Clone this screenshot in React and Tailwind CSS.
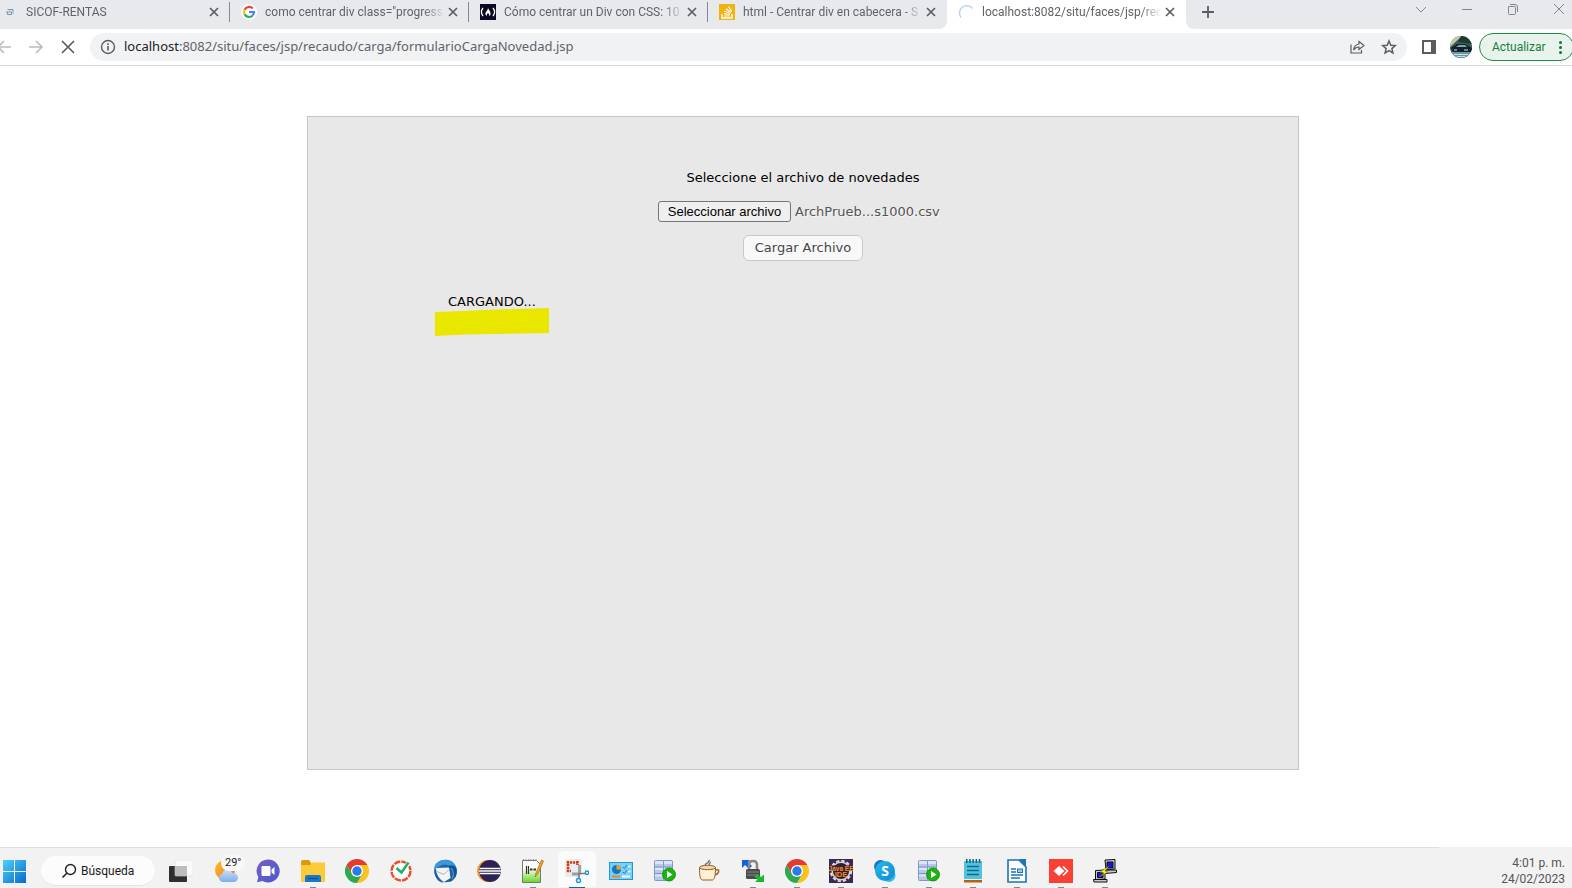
import { useRef, useState } from "react";

const tabs = [
  { title: "SICOF-RENTAS", icon: <SicofIcon /> },
  { title: 'como centrar div class="progress', icon: <GoogleIcon /> },
  { title: "Cómo centrar un Div con CSS: 10", icon: <CampIcon /> },
  { title: "html - Centrar div en cabecera - S", icon: <StackIcon /> },
  { title: "localhost:8082/situ/faces/jsp/reca", icon: <Spinner />, active: true },
];

const apps = [
  { name: "Explorador de archivos", icon: <FolderIcon />, open: true },
  { name: "Google Chrome", icon: <ChromeIcon /> },
  { name: "Reloj", icon: <ClockIcon /> },
  { name: "Thunderbird", icon: <ThunderbirdIcon /> },
  { name: "Eclipse", icon: <EclipseIcon /> },
  { name: "Notepad++", icon: <NotepadPlusIcon />, open: true },
  { name: "Recortes", icon: <SnipIcon />, focused: true },
  { name: "Panel de control", icon: <ControlPanelIcon /> },
  { name: "SQL Developer", icon: <DatabaseIcon /> },
  { name: "Java", icon: <CupIcon /> },
  { name: "WinSCP", icon: <LockIcon />, open: true },
  { name: "Google Chrome 2", icon: <ChromeIcon />, open: true },
  { name: "Java EE IDE", icon: <JavaEEIcon />, open: true },
  { name: "Skype", icon: <SkypeIcon />, open: true },
  { name: "SQL Developer 2", icon: <DatabaseIcon />, open: true },
  { name: "Bloc de notas", icon: <NotepadIcon />, open: true },
  { name: "Writer", icon: <WriterIcon />, open: true },
  { name: "AnyDesk", icon: <AnyDeskIcon />, open: true },
  { name: "PuTTY", icon: <PuttyIcon />, open: true },
];

function Svg({ size = 24, box = 24, children, className = "" }) {
  return (
    <svg
      width={size}
      height={size}
      viewBox={`0 0 ${box} ${box}`}
      fill="none"
      aria-hidden="true"
      className={`shrink-0 ${className}`}
    >
      {children}
    </svg>
  );
}

function SicofIcon() {
  return (
    <Svg size={16} box={16}>
      <path d="M5.500 5.500h5.500v3M4 8h5.500v2.500H5.500V8" stroke="#8097ab" />
      <path d="M7 7h3M10 9.500h2" stroke="#a9c4d8" />
    </Svg>
  );
}

function GoogleIcon() {
  return (
    <Svg size={16} box={16}>
      <circle cx="8" cy="8" r="8" fill="#fff" />
      <path d="M11.800 4.500A5 5 0 0 0 3.600 5.800" stroke="#ea4335" strokeWidth="2.200" />
      <path d="M3.600 5.800a5 5 0 0 0 0 4.500" stroke="#fbbc05" strokeWidth="2.200" />
      <path d="M3.600 10.300a5 5 0 0 0 7.800 1.400" stroke="#34a853" strokeWidth="2.200" />
      <path d="M8 8h5a5 5 0 0 1-1.600 3.700" stroke="#4285f4" strokeWidth="2.200" />
    </Svg>
  );
}

function CampIcon() {
  return (
    <Svg size={16} box={16}>
      <rect width="16" height="16" fill="#0a0a23" />
      <path d="M3 4C1 6.500 1 9.500 3 12M13 4c2 2.500 2 5.500 0 8" stroke="#fff" strokeWidth="1.300" />
      <path d="M8 4c.5 2 2.500 3 2.500 5.500 0 1.500-.8 2.200-1.500 2.500.5-1.500 0-2-1-3-1 1-1.500 1.500-1 3-1-.4-1.600-1.200-1.600-2.500C5.400 7.500 8 6.500 8 4z" fill="#fff" />
    </Svg>
  );
}

function StackIcon() {
  return (
    <Svg size={16} box={16}>
      <rect width="16" height="16" fill="#f0b310" />
      <path d="M3 10v4h10v-4" stroke="#fff" strokeWidth="1.300" />
      <path d="M5 12h6M5 9.700l6 .8M5.500 7.300l5.800 2M7 4.700l4.900 3.600M9.500 2.500l3.300 5" stroke="#fff" strokeWidth="1.200" />
    </Svg>
  );
}

function Spinner() {
  return (
    <Svg size={16} box={16}>
      <path d="M14.500 4.500A7.200 7.200 0 1 0 3 13.500" stroke="#b5d2fa" strokeWidth="1.500" />
    </Svg>
  );
}

function CloseIcon() {
  return (
    <Svg size={16} box={16}>
      <path d="m4 4 8 8M12 4l-8 8" stroke="#5a5e63" strokeWidth="1.700" />
    </Svg>
  );
}

function WindowsIcon() {
  return (
    <Svg>
      <defs>
        <linearGradient id="win" x1="0" y1="0" x2="1" y2="1">
          <stop stopColor="#4fd0fb" />
          <stop offset="1" stopColor="#0669cb" />
        </linearGradient>
      </defs>
      <path d="M1 0h23v23H1z" fill="url(#win)" />
      <path d="M12.500 0v24M0 11.500h24" stroke="#f2f2f2" />
    </Svg>
  );
}

function TaskViewIcon() {
  return (
    <Svg>
      <rect x="0" y="6" width="18" height="16" rx="1" fill="#2e3030" />
      <rect x="6" y="0" width="18" height="16" rx="1" fill="#fafafa" stroke="#dadada" strokeWidth=".6" />
      <path d="M6 6h12v10H6z" fill="#bcbebe" />
    </Svg>
  );
}

function WeatherIcon() {
  return (
    <Svg>
      <defs>
        <linearGradient id="sun" x1="0" y1="0" x2="1" y2="1">
          <stop stopColor="#fbbb2c" />
          <stop offset="1" stopColor="#f27c1c" />
        </linearGradient>
        <linearGradient id="cloud" x1="0" y1="0" x2="0" y2="1">
          <stop stopColor="#c9dffa" />
          <stop offset="1" stopColor="#7fadea" />
        </linearGradient>
      </defs>
      <circle cx="10" cy="11" r="10" fill="url(#sun)" />
      <path d="M6 23a4 4 0 0 1-.5-7.800 5.500 5.500 0 0 1 10.500-1A4.500 4.500 0 0 1 18 23z" transform="translate(1.500 0)" fill="url(#cloud)" />
    </Svg>
  );
}

function TeamsIcon() {
  return (
    <Svg>
      <defs>
        <linearGradient id="teams" x1="0" y1="0" x2="1" y2="1">
          <stop stopColor="#8159c4" />
          <stop offset=".5" stopColor="#5b5fc7" />
          <stop offset="1" stopColor="#5059c9" />
        </linearGradient>
      </defs>
      <path d="M12 .5A11.500 11.500 0 1 1 6.500 22L1 23.300 2.300 18A11.500 11.500 0 0 1 12 .5z" fill="url(#teams)" />
      <rect x="5.500" y="7" width="9" height="10" rx="1.200" fill="#fff" />
      <path d="m15.500 10.500 3-2.500v8l-3-2.500z" fill="#fff" />
    </Svg>
  );
}

function FolderIcon() {
  return (
    <Svg>
      <path d="M0 3q0-2 2-2h6l2 3v5H0z" fill="#d99a0b" />
      <path d="M0 6h9l2-2.500h13V22q0 1-1 1H1q-1 0-1-1z" fill="#fcc938" />
      <path d="M4 23v-5q0-2 2-2h12q2 0 2 2v5z" fill="#1a78cc" />
      <path d="M7 19.500h10" stroke="#0b5299" strokeWidth="1.500" />
    </Svg>
  );
}

function ChromeIcon() {
  return (
    <Svg>
      <path d="M12 6h10.400A12 12 0 0 0 1.600 6l5.200 9z" fill="#e33b2e" />
      <path d="M12 6h10.400A12 12 0 0 1 12 24l5.200-9z" fill="#fcc31e" />
      <path d="M6.800 15 1.600 6A12 12 0 0 0 12 24l5.200-9z" fill="#2da94f" />
      <circle cx="12" cy="12" r="6" fill="#fff" />
      <circle cx="12" cy="12" r="4.700" fill="#2a7af0" />
    </Svg>
  );
}

function ClockIcon() {
  return (
    <Svg>
      <circle cx="12" cy="12" r="11" fill="#fff" />
      <circle cx="12" cy="12" r="9.500" stroke="#e6502f" strokeWidth="2.500" strokeDasharray="6.500 .96" />
      <path d="m7.500 9 5 5 7-10" stroke="#fff" strokeWidth="4.500" />
      <path d="m7.500 9 5 4.500 7-10" stroke="#23b06a" strokeWidth="2.600" />
    </Svg>
  );
}

function ThunderbirdIcon() {
  return (
    <Svg>
      <circle cx="12.500" cy="12" r="11.300" fill="#1e62ab" />
      <path d="M1.500 11C0 5 6 .5 12 1c6 0 11 4 11.500 9-2-3-5-4-8-3.500C12 5 6 6 1.500 11z" fill="#3c98dc" />
      <path d="M3 9 16 8.500 17.500 19 11 23C6 20 3 15 3 9z" fill="#f4f4f4" />
      <path d="m4 12.500 7 3 5-5" stroke="#aeb5bd" />
      <path d="M1.500 9c0 8 4 13 9.500 14.800C6 24 1 19 1.500 9z" fill="#12478a" />
      <path d="M15 8c5 2 6 9 1 15 7-2 9-9 7-14-2-3-5-3-8-1z" fill="#174f93" />
      <path d="M18 9c3 3 3 8 1 11" stroke="#3c98dc" strokeWidth="1.400" />
    </Svg>
  );
}

function EclipseIcon() {
  return (
    <Svg>
      <circle cx="11" cy="12" r="11" fill="#f79a25" />
      <circle cx="13" cy="12" r="11" fill="#2c2255" />
      <path d="M2.500 9.500h21M2 12h22M2.500 14.500h21" stroke="#fff" strokeWidth="1.400" />
    </Svg>
  );
}

function NotepadPlusIcon() {
  return (
    <Svg>
      <defs>
        <linearGradient id="npp" x1="0" y1="0" x2="0" y2="1">
          <stop offset=".35" stopColor="#fff" />
          <stop offset="1" stopColor="#65d61d" />
        </linearGradient>
      </defs>
      <path d="M1.500 1.500h14l4 4v18h-18z" fill="url(#npp)" stroke="#777" />
      <path d="M2 1h14" stroke="#777" strokeDasharray="1 1.500" strokeWidth="1.500" />
      <path d="M5.500 7v8M7.500 7v8" stroke="#333" strokeWidth="1.200" />
      <path d="M9 10.500h2.500M12.500 10.500H15" stroke="#333" strokeWidth="1.800" />
      <path d="m14 18 1-4L20.500 1l2 1L17 15z" fill="#f2a91c" stroke="#a0691a" strokeWidth=".7" />
    </Svg>
  );
}

function SnipIcon() {
  return (
    <Svg>
      <rect width="17" height="18" rx="2" fill="#e7ecf2" />
      <path d="M3 2v11M2 3.500h11M2 12h4M12.500 2v4" stroke="#d83b01" strokeWidth="2.600" strokeDasharray="2.200 .8" />
      <path d="M14.500 6v7q0 2-2 2H7" stroke="#9a9ea3" strokeWidth="2.800" />
      <path d="M14 14v6M14 14.500h7" stroke="#777b80" strokeWidth="1.600" />
      <circle cx="13.500" cy="21.500" r="2" stroke="#1898db" strokeWidth="1.500" />
      <circle cx="22" cy="13.700" r="1.700" stroke="#1898db" strokeWidth="1.500" />
    </Svg>
  );
}

function ControlPanelIcon() {
  return (
    <Svg>
      <rect x=".5" y="3.500" width="23" height="17" fill="#79d0f7" stroke="#2196d8" />
      <circle cx="7.500" cy="10.500" r="4.500" fill="#1676c4" />
      <path d="M7.500 10.500h4.500A4.500 4.500 0 0 0 7.500 6z" fill="#f7a21b" />
      <path d="M14 8l1.500 1.500L18 6M14 13l1.500 1.500L18 11" stroke="#1676c4" />
      <path d="M19 7.500h2.500M19 12.500h2.500" stroke="#fff" strokeWidth="1.600" />
      <path d="M3 17.500h8" stroke="#f08519" strokeWidth="2" />
      <path d="M13 17.500h8" stroke="#fff" strokeWidth="2" />
    </Svg>
  );
}

function DatabaseIcon() {
  return (
    <Svg>
      <rect x="1.500" y="1.500" width="18" height="20" rx="1" fill="#b8c8e6" stroke="#7d99c9" />
      <path d="M2 2h17v3H2zM2 9h17v2H2zM2 15.500h17v2H2z" fill="#dce6f6" />
      <path d="M1.500 8h18M1.500 14.500h18M10.500 2v20" stroke="#7d99c9" />
      <circle cx="16" cy="15.500" r="6.500" fill="#19b50c" stroke="#118807" strokeWidth=".8" />
      <path d="m14 12 5.500 3.500L14 19z" fill="#fff" />
    </Svg>
  );
}

function CupIcon() {
  return (
    <Svg>
      <path d="M9 7c-3-3 4-2 3-6M13 6c-2-1 1-2 0-3" stroke="#777" strokeWidth="1.500" />
      <path d="M18.500 11q4-1 3 2t-5 3" stroke="#a56728" strokeWidth="1.600" />
      <path d="M2.500 8.500c0 8 .5 12 3 12.500h10c2.500-1 3-6 3-12.500z" fill="#fff1d6" stroke="#9a5b24" />
      <ellipse cx="10.500" cy="8.500" rx="8" ry="2.200" fill="#f0d4ab" stroke="#9a5b24" />
    </Svg>
  );
}

function LockIcon() {
  return (
    <Svg>
      <path d="M1 1h8L7 3l4 4-3 3-4-4-3 3z" fill="#1262dd" />
      <path d="M8 11V6q0-4 4-4t4 4v5" stroke="#888" strokeWidth="2.500" />
      <rect x="5" y="10" width="14" height="10" rx="1.500" fill="#4b4b4b" />
      <path d="M6 13h12M6 16h12" stroke="#868686" />
      <path d="M23 23h-9l2.500-2.500L13 17l3-2 4 3 3-2.500z" fill="#18b830" />
    </Svg>
  );
}

function JavaEEIcon() {
  return (
    <Svg>
      <rect width="24" height="24" fill="#3d2654" />
      <circle cx="12" cy="12" r="10.200" stroke="#ddd" strokeWidth="2" strokeDasharray="3.340 2" />
      <circle cx="12" cy="12" r="8.800" fill="#2c1f30" stroke="#d5d5d5" strokeWidth="1.500" />
      <path d="M0 6.500h24v5H0z" fill="#3d2230" />
      <text x="12" y="11.500" textAnchor="middle" fontSize="6.500" fontWeight="700" fill="#f58a2c" fontFamily="Liberation Sans, sans-serif">
        Java EE
      </text>
      <text x="12" y="18" textAnchor="middle" fontSize="7.500" fontWeight="700" fill="#f58a2c" fontFamily="Liberation Sans, sans-serif">
        IDE
      </text>
    </Svg>
  );
}

function SkypeIcon() {
  return (
    <Svg>
      <defs>
        <linearGradient id="skype" x1="0" y1="0" x2="1" y2="1">
          <stop stopColor="#29b8ee" />
          <stop offset="1" stopColor="#0a8ad2" />
        </linearGradient>
      </defs>
      <circle cx="7.500" cy="7.500" r="6.500" fill="#1477c4" />
      <circle cx="16" cy="16.500" r="6.500" fill="#30bdf0" />
      <circle cx="12" cy="12" r="10" fill="url(#skype)" />
      <text x="12" y="17" textAnchor="middle" fontSize="14" fontWeight="700" fill="#fff" fontFamily="Open Sans, sans-serif">
        S
      </text>
    </Svg>
  );
}

function NotepadIcon() {
  return (
    <Svg>
      <rect x="3" y="2" width="18" height="19" rx="1" fill="#50c2dc" />
      <path d="M3 21h18v2.500H3z" fill="#b5611c" />
      <path d="M3 20.500h18" stroke="#eee" />
      <path d="M5 2h15" stroke="#0d6381" strokeWidth="4" strokeDasharray="1.500 1.700" />
      <path d="M6 7.500h12M6 11.500h12M6 15.500h12" stroke="#126a8a" strokeWidth="1.500" />
    </Svg>
  );
}

function WriterIcon() {
  return (
    <Svg>
      <path d="M3 1h11l7 7v15H3z" fill="#fff" stroke="#1e73b2" strokeWidth="1.600" />
      <path d="M14 0h7v8z" fill="#1e73b2" />
      <path d="M6 10h5M6 13h5M6 16h12M6 19h9" stroke="#1e73b2" strokeWidth="1.400" />
      <rect x="12.500" y="10" width="5" height="3.500" fill="#9fcbe9" stroke="#1e73b2" />
    </Svg>
  );
}

function AnyDeskIcon() {
  return (
    <Svg>
      <rect width="24" height="24" fill="#fa4034" />
      <path d="m10 7 5.500 5-5.500 5-5.500-5z" fill="#fff" />
      <path d="m14 7.500 4.500 4.500-4.500 4.500" stroke="#fff" strokeWidth="1.700" />
    </Svg>
  );
}

function PuttyIcon() {
  return (
    <Svg>
      <path d="m12 1 10-.500V10l-9 1zM10 11h13.500v2.500L12 14.500z" fill="#c9c9c9" stroke="#111" />
      <path d="M14 3h6v6h-6z" fill="#1515e8" stroke="#111" />
      <path d="M2.500 11.500 12 11v9l-9.500.5zM.5 20.500H14V23H1z" fill="#c9c9c9" stroke="#111" />
      <path d="M4.500 13.500h5.500v5H4.500z" fill="#1515e8" stroke="#111" />
      <path d="m16 7-9 6 4 1-5 4 9-5-3-1z" fill="#fff21a" stroke="#6b6400" strokeWidth=".5" />
    </Svg>
  );
}

function Tab({ tab, first, last }) {
  return (
    <div
      className={`flex h-[29px] min-w-0 items-center pb-[5px] ${
        first ? "w-[230px] pl-0.5" : "w-[239px] pl-[11px]"
      } ${tab.active ? "bg-white" : ""}`}
    >
      {tab.icon}
      <a
        href="#"
        className="ml-2 w-[180px] overflow-hidden text-xs whitespace-nowrap text-[#5f6368] [mask-image:linear-gradient(to_right,#000_88%,transparent)]"
      >
        {tab.title}
      </a>
      <button type="button" aria-label={`Cerrar ${tab.title}`}>
        <CloseIcon />
      </button>
      {!tab.active && !last && <span className="ml-auto h-5 w-px bg-[#85888d]" />}
    </div>
  );
}

function TabStrip() {
  return (
    <div className="flex h-[29px] bg-white">
      <div className="flex rounded-br-lg bg-[#e8e9ed]">
        {tabs
          .filter((tab) => !tab.active)
          .map((tab, i, list) => (
            <Tab key={tab.title} tab={tab} first={i === 0} last={i === list.length - 1} />
          ))}
      </div>
      <Tab tab={tabs[tabs.length - 1]} />
      <div className="flex flex-1 items-start justify-between overflow-hidden rounded-bl-lg bg-[#e8e9ed]">
        <button type="button" aria-label="Nueva pestaña" className="mt-1 ml-3.5">
          <Svg size={16} box={16}>
            <path d="M8 2v12M2 8h12" stroke="#5a5e63" strokeWidth="1.800" />
          </Svg>
        </button>
        <div className="-mr-2.5 flex">
          <WindowButton label="Buscar pestañas" d="m3 6 5 5 5-5" />
          <WindowButton label="Minimizar" d="M3 8.500h10" />
          <WindowButton label="Restaurar" d="M3.500 5.500h6q1 0 1 1v6q0 1-1 1h-5q-1 0-1-1v-7M5 3.500h5q2.500 0 2.500 2.500v5" />
          <WindowButton label="Cerrar" d="m3 3 10 10M13 3 3 13" />
        </div>
      </div>
    </div>
  );
}

function WindowButton({ label, d }) {
  return (
    <button type="button" aria-label={label} className="flex w-[46px] justify-center pt-px">
      <Svg size={16} box={16}>
        <path d={d} stroke="#85868a" />
      </Svg>
    </button>
  );
}

function Toolbar() {
  return (
    <div className="flex h-[37px] items-center overflow-hidden border-b border-[#d9dadc] bg-white">
      <button type="button" aria-label="Atrás" className="-ml-1">
        <Svg size={16} box={16}>
          <path d="M15 8H2M8 2 2 8l6 6" stroke="#babcbe" strokeWidth="1.600" />
        </Svg>
      </button>
      <button type="button" aria-label="Adelante" className="ml-4">
        <Svg size={16} box={16}>
          <path d="M1 8h13M8 2l6 6-6 6" stroke="#babcbe" strokeWidth="1.600" />
        </Svg>
      </button>
      <button type="button" aria-label="Detener" className="ml-4">
        <Svg size={16} box={16}>
          <path d="m2 2 12 12M14 2 2 14" stroke="#5a5e63" strokeWidth="1.700" />
        </Svg>
      </button>
      <div className="ml-3.5 flex h-7 flex-1 items-center rounded-full bg-[#f1f2f4] pr-2.5 pl-2.5">
        <Svg size={16} box={16}>
          <circle cx="8" cy="8" r="6.500" stroke="#5a5e63" strokeWidth="1.400" />
          <path d="M8 7v4.500M8 4.200V6" stroke="#5a5e63" strokeWidth="1.600" />
        </Svg>
        <p className="ml-2 flex-1 font-['Noto_Sans','Open_Sans',sans-serif] text-[13px] whitespace-nowrap text-[#5f6368]">
          <span className="text-[#202124]">localhost</span>
          :8082/situ/faces/jsp/recaudo/carga/formularioCargaNovedad.jsp
        </p>
        <button type="button" aria-label="Compartir">
          <Svg size={16} box={16}>
            <path d="M2 5.500v8.500h10.500v-3" stroke="#5a5e63" strokeWidth="1.200" />
            <path d="M10 2.500 15 6.500l-5 4V8C7.500 8 6 9 4.500 11 5 7.500 7 5.500 10 5z" stroke="#5a5e63" strokeWidth="1.200" />
          </Svg>
        </button>
        <button type="button" aria-label="Marcadores" className="ml-4">
          <Svg size={16} box={16}>
            <path d="m8 2 1.800 4.200 4.500.4-3.400 3 1 4.400L8 11.700 4.100 14l1-4.400-3.400-3 4.500-.4z" stroke="#5a5e63" strokeWidth="1.500" />
          </Svg>
        </button>
      </div>
      <button type="button" aria-label="Panel lateral" className="ml-3.5">
        <Svg size={16} box={16}>
          <path d="M1 1h14v14H1z" fill="#5a5e63" />
          <path d="M3 3h7v10H3z" fill="#fff" />
        </Svg>
      </button>
      <button type="button" aria-label="Perfil" className="ml-[13px]">
        <Svg size={22} box={22}>
          <defs>
            <clipPath id="avatar">
              <circle cx="11" cy="11" r="11" />
            </clipPath>
          </defs>
          <g clipPath="url(#avatar)">
            <path d="M0 0h22v22H0z" fill="#3a5a5e" />
            <path d="M0 0h12L0 11z" fill="#c3cba6" />
            <path d="M11 0h11v8L8 6z" fill="#1e3a2e" />
            <path d="m1 12 6-4h8l7 4v4H3z" fill="#14222c" />
            <path d="m6 11 3-2h6l2 2z" fill="#7fa5aa" />
            <path d="M0 16h22v6H0z" fill="#6d97a5" />
            <path d="M4 14h3M14 14h4M4 18.500h14M7 20.500h8" stroke="#cfdfe2" />
          </g>
        </Svg>
      </button>
      <button
        type="button"
        className="-mr-0.5 ml-[7px] flex h-7 w-[95px] items-center rounded-full border border-[#1e8e3e] bg-[#e9f3ed] pl-3 text-xs text-[#188038]"
      >
        Actualizar
        <span className="mr-[11px] ml-auto flex flex-col gap-0.5">
          <i className="size-[3px] rounded-full bg-[#137333]" />
          <i className="size-[3px] rounded-full bg-[#137333]" />
          <i className="size-[3px] rounded-full bg-[#137333]" />
        </span>
      </button>
    </div>
  );
}

function UploadForm() {
  const inputRef = useRef(null);
  const [fileName, setFileName] = useState("ArchPrueb...s1000.csv");

  return (
    <form
      onSubmit={(e) => e.preventDefault()}
      className="flex flex-1 flex-col border border-[#c6c6c6] bg-[#e8e8e8] pt-[51px] font-['DejaVu_Sans',Verdana,sans-serif] text-[13px]"
    >
      <label htmlFor="archivo" className="text-center leading-5 text-black">
        Seleccione el archivo de novedades
      </label>
      <div className="mx-auto mt-[13px] flex w-[290px] items-center">
        <input
          id="archivo"
          ref={inputRef}
          type="file"
          accept=".csv"
          className="hidden"
          onChange={(e) => e.target.files[0] && setFileName(e.target.files[0].name)}
        />
        <button
          type="button"
          onClick={() => inputRef.current.click()}
          className="h-[21px] w-[133px] shrink-0 rounded-[3px] border border-[#767676] bg-[#efefef] font-['Liberation_Sans',Arial,sans-serif] text-[13px] leading-none whitespace-nowrap text-black"
        >
          Seleccionar archivo
        </button>
        <span className="ml-1 whitespace-nowrap text-[#555] [text-shadow:1px_1px_0_#f6f6f6]">
          {fileName}
        </span>
      </div>
      <button
        type="submit"
        className="mx-auto mt-[13px] h-[26px] w-[120px] rounded-md border border-[#c8c8c8] bg-[#f8f8f8] whitespace-nowrap text-[#454545]"
      >
        Cargar Archivo
      </button>
      <div className="mt-[31px] ml-[127px] w-[114px]" role="status">
        <p className="pl-[13px] leading-5 text-black">CARGANDO...</p>
        <svg width="114" height="28" viewBox="0 0 114 28" className="-mt-1 block" aria-hidden="true">
          <path d="M0 4 28 3 60 1.500 114 0v25L60 26 30 26.500 0 28z" fill="#e9e700" />
        </svg>
      </div>
    </form>
  );
}

function Taskbar() {
  return (
    <footer className="relative flex h-[41px] items-start overflow-hidden bg-[#f2f2f2]">
      <div className="absolute top-0 left-0 h-px w-[1439px] bg-[#dfdfdf]" />
      <button type="button" aria-label="Inicio" className="mt-[13px] ml-[2px]">
        <WindowsIcon />
      </button>
      <button
        type="button"
        className="mt-[9px] ml-[15px] flex h-[30px] w-[114px] items-center rounded-full border-b border-[#e2e2e2] bg-[#fcfcfc] pl-5 text-xs text-[#1b1b1b]"
      >
        <Svg size={16} box={16} className="mr-1">
          <circle cx="9.500" cy="6.500" r="5" stroke="#222" strokeWidth="1.400" />
          <path d="m6 10-4.500 4.500" stroke="#222" strokeWidth="1.600" />
        </Svg>
        Búsqueda
      </button>
      <button type="button" aria-label="Vista de tareas" className="mt-[13px] ml-3.5">
        <TaskViewIcon />
      </button>
      <button type="button" aria-label="Clima" className="relative mt-3 ml-[22px]">
        <WeatherIcon />
        <span className="absolute -top-1 left-1.5 rounded-full bg-[#f8f8f8] px-1 text-[11px] leading-4 text-[#1b1b1b]">
          29°
        </span>
      </button>
      <button type="button" aria-label="Chat" className="mt-3 ml-[17px]">
        <TeamsIcon />
      </button>
      <nav className="ml-[11px] flex">
        {apps.map((app) => (
          <button
            key={app.name}
            type="button"
            aria-label={app.name}
            className="flex h-[41px] w-11 flex-col items-center"
          >
            <span
              className={`mt-1 flex h-9 w-[38px] justify-center rounded-t-md pt-2 ${
                app.focused ? "bg-[#fbfbfb]" : ""
              }`}
            >
              {app.icon}
            </span>
            {app.open && <span className="h-px w-1.5 bg-[#868686]" />}
            {app.focused && <span className="h-px w-4 bg-[#0067c0]" />}
          </button>
        ))}
      </nav>
      <div className="mt-2 mr-[7px] ml-auto text-right text-xs leading-4 text-[#555]">
        <p>4:01 p. m.</p>
        <p>24/02/2023</p>
      </div>
    </footer>
  );
}

export default function App() {
  return (
    <div className="flex min-h-screen flex-col overflow-hidden bg-white font-[Roboto,'Noto_Sans',sans-serif]">
      <header>
        <TabStrip />
        <Toolbar />
      </header>
      <main className="flex flex-1 flex-col pt-[50px] pr-[273px] pb-[77px] pl-[307px]">
        <UploadForm />
      </main>
      <Taskbar />
    </div>
  );
}
